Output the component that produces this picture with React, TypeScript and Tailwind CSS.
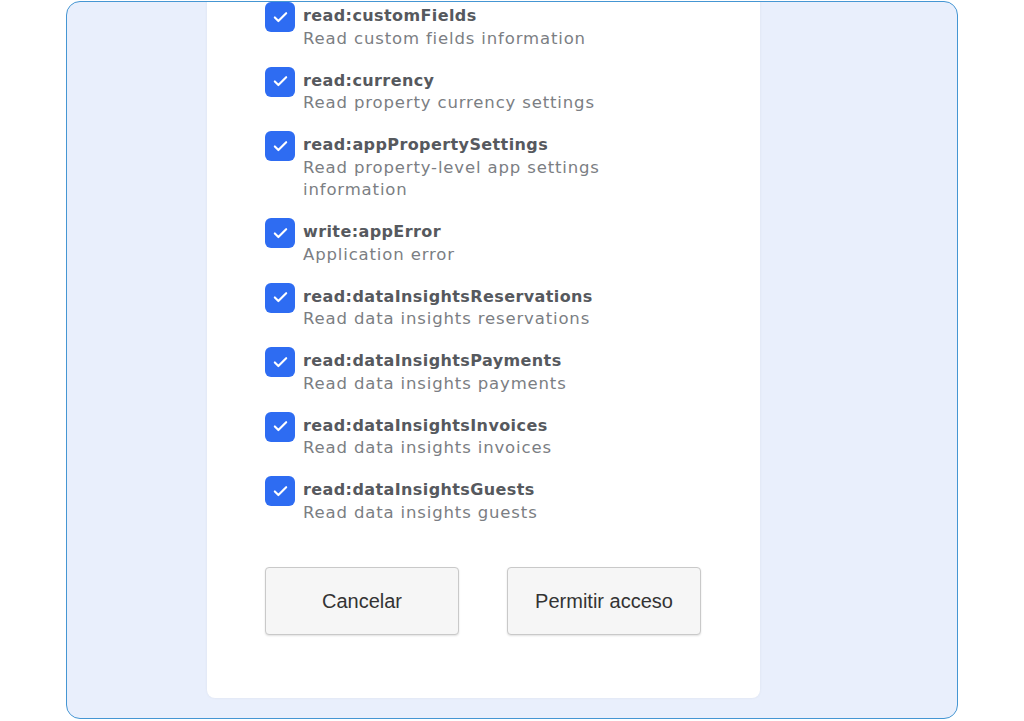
import { Check } from "lucide-react";

const scopes = [
  { name: "read:customFields", desc: "Read custom fields information" },
  { name: "read:currency", desc: "Read property currency settings" },
  { name: "read:appPropertySettings", desc: "Read property-level app settings information" },
  { name: "write:appError", desc: "Application error" },
  { name: "read:dataInsightsReservations", desc: "Read data insights reservations" },
  { name: "read:dataInsightsPayments", desc: "Read data insights payments" },
  { name: "read:dataInsightsInvoices", desc: "Read data insights invoices" },
  { name: "read:dataInsightsGuests", desc: "Read data insights guests" },
];

export default function App() {
  return (
    <div className="h-[721px] w-[1024px] bg-white pt-px">
      <div className="ml-[66px] flex h-[718px] w-[892px] overflow-hidden rounded-[14px] border-[1.5px] border-[#4596d3] bg-[#e9effc]">
        <div className="-mt-[13px] mb-[20px] ml-[140px] flex w-[553px] flex-col rounded-lg bg-white pb-[62px] pl-[58px] pt-[13px] shadow-[0_0_3px_rgba(0,0,0,0.06)]">
          <ul className="flex flex-col gap-[16.5px]">
            {scopes.map((s) => (
              <li key={s.name} className="flex gap-2">
                <span className="flex h-[30px] w-[30px] shrink-0 items-center justify-center rounded-[6px] bg-[#2e6cf2]">
                  <Check size={17} strokeWidth={3} className="text-white" />
                </span>
                <div className="mt-[3px] w-[310px] leading-[22.5px] font-['DejaVu_Sans',sans-serif]">
                  <p className="text-[16px] font-bold tracking-[0.4px] text-[#56595e]">{s.name}</p>
                  <p className="text-[16.5px] tracking-[0.85px] text-[#7b7e83]">{s.desc}</p>
                </div>
              </li>
            ))}
          </ul>
          <div className="mt-[43px] flex gap-[48px] font-['Liberation_Sans',Arial,sans-serif]">
            <button className="h-[68px] w-[194px] rounded-[4px] border border-[#c9c9c9] bg-[#f6f6f6] text-[20px] text-[#333] shadow-[0_1px_2px_rgba(0,0,0,0.12)]">
              Cancelar
            </button>
            <button className="h-[68px] w-[194px] rounded-[4px] border border-[#c9c9c9] bg-[#f6f6f6] text-[20px] text-[#333] shadow-[0_1px_2px_rgba(0,0,0,0.12)]">
              Permitir acceso
            </button>
          </div>
        </div>
      </div>
    </div>
  );
}
